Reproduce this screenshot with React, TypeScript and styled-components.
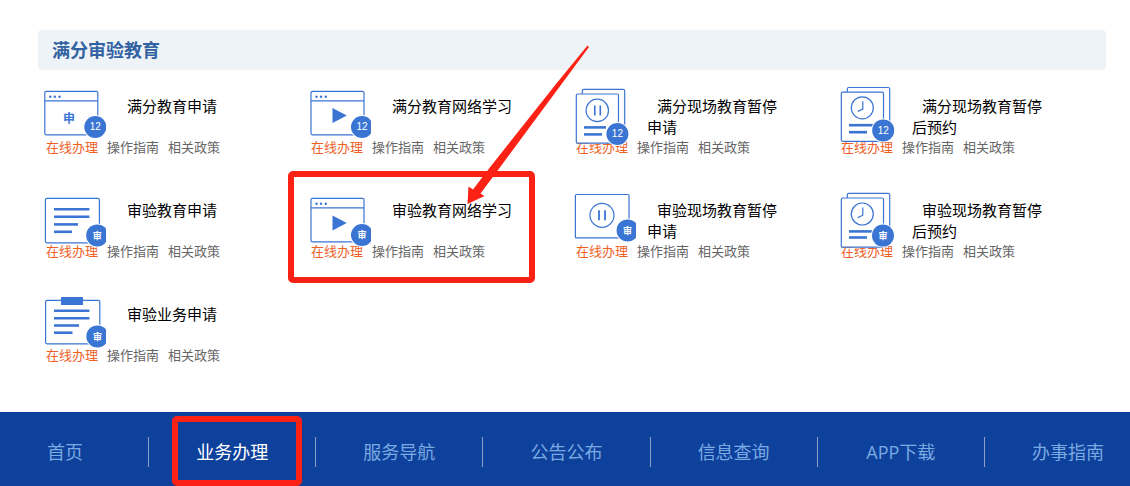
import React from "react";
import styled, { createGlobalStyle } from "styled-components";

const BLUE = "#3b75d3";
const RED = "#fc2115";

const GlobalStyle = createGlobalStyle`
  * { box-sizing: border-box; }
  body {
    margin: 0;
    background: #fff;
    color: #000;
    font-family: "Open Sans", "Noto Sans CJK SC", sans-serif;
    overflow-x: hidden;
  }
  a { text-decoration: none; }
`;

const Services = styled.main`
  padding: 30px 24px 48px 38px;
`;

const SectionTitle = styled.h2`
  margin: 0;
  padding: 0 14px;
  border-radius: 4px;
  background: #eef3f8;
  color: #3262a1;
  font-size: 18px;
  line-height: 40px;
  font-weight: 700;
`;

const ServiceGrid = styled.ul`
  display: grid;
  grid-template-columns: repeat(4, minmax(0, 1fr));
  row-gap: 33px;
  margin: 15px 0 0;
  padding: 0 2px 0 6px;
  list-style: none;
`;

const ServiceItem = styled.li`
  position: relative;
`;

const ServiceHead = styled.div`
  display: flex;
  gap: 11px;
`;

const ServiceIcon = styled.svg`
  position: relative;
  z-index: 1;
  flex: none;
  display: block;
  width: 62px;
  height: 62px;
`;

const ServiceName = styled.h3`
  margin: 0;
  padding-top: 11px;
  max-width: 140px;
  text-indent: 10px;
  font-size: 15px;
  line-height: 21px;
  font-weight: 400;
`;

const ServiceLinks = styled.div`
  display: flex;
  gap: 9px;
  margin-top: -9px;
  padding-left: 2px;
  font-size: 13px;
  line-height: 18px;
`;

const ServiceLink = styled.a<{ $primary?: boolean }>`
  color: ${(p) => (p.$primary ? "#f0601f" : "#666")};
`;

const ServiceMark = styled.div`
  position: absolute;
  inset: -18px 39px -23px -21px;
  border: 6px solid ${RED};
  border-radius: 5px;
  pointer-events: none;
`;

const Arrow = styled.svg`
  position: absolute;
  z-index: 2;
  left: 156px;
  top: -145px;
  width: 126px;
  height: 162px;
  pointer-events: none;
`;

const NavBar = styled.nav`
  overflow: hidden;
  background: #0e419c;
`;

const NavList = styled.ul`
  display: grid;
  grid-template-columns: repeat(7, minmax(0, 1fr));
  margin: 0 -22px 0 -18px;
  padding: 0;
  list-style: none;
`;

const NavItem = styled.li`
  position: relative;
  padding: 25px 0 19px;
`;

const NavLink = styled.a<{ $active?: boolean }>`
  display: block;
  border-right: 1px solid #8b9fc8;
  color: ${(p) => (p.$active ? "#fff" : "#7aaae2")};
  font-size: 18px;
  line-height: 30px;
  text-align: center;
`;

const NavMark = styled.div`
  position: absolute;
  inset: 4px 14px 0 23px;
  border: 6px solid ${RED};
  border-radius: 5px;
  pointer-events: none;
`;

type Point = { x: number; y: number };

const Badge = ({ x, y, label }: Point & { label: string }) => (
  <g>
    <circle cx={x} cy={y} r="12" fill="#fff" />
    <circle cx={x} cy={y} r="11" fill={BLUE} />
    <text
      x={x}
      y={y + 3.4}
      fill="#fff"
      fontSize={label === "12" ? 10 : 9}
      fontWeight={label === "12" ? 400 : 700}
      fontFamily='"Liberation Sans", "Noto Sans CJK SC", sans-serif'
      textAnchor="middle"
    >
      {label}
    </text>
  </g>
);

const BrowserFrame = ({ x, y }: Point) => (
  <g>
    <rect x={x} y={y} width="53" height="43.5" rx="1.5" fill="#fff" stroke={BLUE} strokeWidth="1.2" />
    <path d={`M${x} ${y + 9.5}h53`} stroke={BLUE} strokeWidth="1.2" />
    {[5.5, 10, 14.8].map((dx) => (
      <circle key={dx} cx={x + dx} cy={y + 5.5} r="1.2" fill={BLUE} />
    ))}
  </g>
);

const Play = ({ x, y }: Point) => <path d={`M${x} ${y}l14.3 7.5l-14.3 7.5z`} fill={BLUE} />;

const Pages = ({ y, children }: { y: number; children: React.ReactNode }) => (
  <g fill="#fff" stroke={BLUE} strokeWidth="1.2">
    <rect x="8.3" y={y} width="42.4" height="50" rx="1.5" />
    <rect x="2.3" y={y + 4.6} width="42.2" height="49.2" rx="1.5" />
    {children}
  </g>
);

const Lines = ({ rows, x = 10 }: { rows: [number, number][]; x?: number }) => (
  <g stroke={BLUE} strokeWidth="2.6">
    {rows.map(([y, w]) => (
      <path key={y} d={`M${x} ${y}h${w}`} />
    ))}
  </g>
);

const Clock = ({ y }: { y: number }) => (
  <g fill="none" stroke={BLUE} strokeWidth="1.2">
    <circle cx="23.3" cy={y} r="11" />
    <path d={`M23.8 ${y - 6.5}v7.7l-5 2.4`} />
  </g>
);

const icons = {
  apply12: (
    <>
      <BrowserFrame x={0.8} y={6.3} />
      <text
        x="25"
        y="38"
        fill={BLUE}
        fontSize="12"
        fontWeight="700"
        fontFamily='"Noto Sans CJK SC", sans-serif'
        textAnchor="middle"
      >
        申
      </text>
      <Badge x={51.3} y={42} label="12" />
    </>
  ),
  video12: (
    <>
      <BrowserFrame x={2} y={6.3} />
      <Play x={23.5} y={23} />
      <Badge x={53} y={42} label="12" />
    </>
  ),
  pause12: (
    <>
      <Pages y={4.4}>
        <circle cx="23.3" cy="25.4" r="11.2" />
        <path d="M20.8 20.6v9.8M26.3 20.6v9.8" strokeWidth="1.6" />
      </Pages>
      <Lines rows={[[42.4, 22], [49.4, 18]]} />
      <Badge x={43.4} y={49} label="12" />
    </>
  ),
  clock12: (
    <>
      <Pages y={2.5}>
        <Clock y={22.8} />
      </Pages>
      <Lines rows={[[40.2, 24], [47.2, 18]]} />
      <Badge x={44.2} y={45.4} label="12" />
    </>
  ),
  document: (
    <>
      <rect x="1.4" y="9.4" width="54" height="44.4" rx="1.5" fill="#fff" stroke={BLUE} strokeWidth="1.2" />
      <Lines rows={[[20.2, 35.4], [27.8, 35.4], [35.4, 24], [42.8, 18]]} />
      <Badge x={53.2} y={46.4} label="审" />
    </>
  ),
  video: (
    <>
      <BrowserFrame x={2} y={9.3} />
      <Play x={23.5} y={26.5} />
      <Badge x={53} y={46} label="审" />
    </>
  ),
  pause: (
    <>
      <g fill="#fff" stroke={BLUE} strokeWidth="1.2">
        <rect x="1.4" y="5.5" width="53.6" height="43.4" rx="1" />
        <circle cx="28" cy="26.3" r="12" />
        <path d="M25 21.3v10M31 21.3v10" strokeWidth="1.8" />
      </g>
      <Badge x={53.6} y={41.4} label="审" />
    </>
  ),
  clock: (
    <>
      <Pages y={4.4}>
        <Clock y={25} />
      </Pages>
      <Lines rows={[[42.4, 24], [48.5, 18]]} />
      <Badge x={44} y={46.6} label="审" />
    </>
  ),
  clipboard: (
    <>
      <rect x="1.6" y="7.4" width="54.2" height="43.4" rx="1.5" fill="#fff" stroke={BLUE} strokeWidth="1.2" />
      <rect x="17" y="4" width="22" height="8" rx="0.6" fill={BLUE} />
      <Lines rows={[[17.8, 35.4], [25.2, 35.4], [32.5, 25], [39.7, 18.5]]} />
      <Badge x={53.4} y={43.4} label="审" />
    </>
  ),
};

type Service = { name: string; icon: keyof typeof icons; marked?: boolean };

const services: Service[] = [
  { name: "满分教育申请", icon: "apply12" },
  { name: "满分教育网络学习", icon: "video12" },
  { name: "满分现场教育暂停申请", icon: "pause12" },
  { name: "满分现场教育暂停后预约", icon: "clock12" },
  { name: "审验教育申请", icon: "document" },
  { name: "审验教育网络学习", icon: "video", marked: true },
  { name: "审验现场教育暂停申请", icon: "pause" },
  { name: "审验现场教育暂停后预约", icon: "clock" },
  { name: "审验业务申请", icon: "clipboard" },
];

const navItems = ["首页", "业务办理", "服务导航", "公告公布", "信息查询", "APP下载", "办事指南"];
const activeNav = "业务办理";

export default function App() {
  return (
    <>
      <GlobalStyle />
      <Services>
        <SectionTitle>满分审验教育</SectionTitle>
        <ServiceGrid>
          {services.map(({ name, icon, marked }) => (
            <ServiceItem key={name}>
              <ServiceHead>
                <ServiceIcon viewBox="0 0 62 62" aria-hidden="true">
                  {icons[icon]}
                </ServiceIcon>
                <ServiceName>{name}</ServiceName>
              </ServiceHead>
              <ServiceLinks>
                <ServiceLink href="#apply" $primary>在线办理</ServiceLink>
                <ServiceLink href="#guide">操作指南</ServiceLink>
                <ServiceLink href="#policy">相关政策</ServiceLink>
              </ServiceLinks>
              {marked && (
                <>
                  <ServiceMark />
                  <Arrow viewBox="465 44 126 162" aria-hidden="true">
                    <path
                      d="M587.5 45.5L589 47L501 166L480.5 193.5L484.5 196L467.5 204L468.5 186.5L473 189.5L491 166L556 84Z"
                      fill={RED}
                    />
                  </Arrow>
                </>
              )}
            </ServiceItem>
          ))}
        </ServiceGrid>
      </Services>
      <NavBar>
        <NavList>
          {navItems.map((label) => (
            <NavItem key={label}>
              <NavLink
                href="#nav"
                $active={label === activeNav}
                aria-current={label === activeNav ? "page" : undefined}
              >
                {label}
              </NavLink>
              {label === activeNav && <NavMark />}
            </NavItem>
          ))}
        </NavList>
      </NavBar>
    </>
  );
}
